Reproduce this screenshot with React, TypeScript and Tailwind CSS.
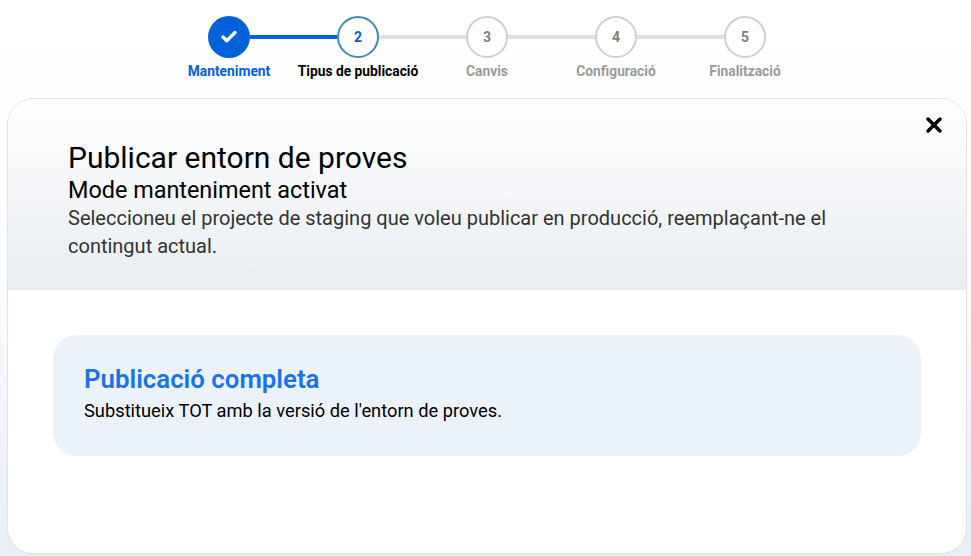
import { Check, X } from "lucide-react";

const steps = ["Manteniment", "Tipus de publicació", "Canvis", "Configuració", "Finalització"];

function Circle({ index }: { index: number }) {
  if (index === 0) {
    return (
      <div className="flex h-[42px] w-[42px] shrink-0 items-center justify-center rounded-full bg-[#0061d9] text-white">
        <Check size={18} strokeWidth={4.5} />
      </div>
    );
  }
  return (
    <div
      className={
        index === 1
          ? "flex h-[42px] w-[42px] shrink-0 items-center justify-center rounded-full border-2 border-[#3d8bb5] bg-white text-[14px] font-bold text-[#0061d9]"
          : "flex h-[42px] w-[42px] shrink-0 items-center justify-center rounded-full border-2 border-[#cfcfcf] bg-white text-[14px] font-bold text-[#808080]"
      }
    >
      {index + 1}
    </div>
  );
}

export default function App() {
  return (
    <main
      className="h-[556px] w-[971px] overflow-hidden bg-gradient-to-b from-white via-[#fbfcfe] to-[#e8eef6] pt-[16px]"
      style={{ fontFamily: "Roboto, sans-serif" }}
    >
      {/* Stepper */}
      <div className="flex flex-col items-center pl-[3px]">
        <div className="flex items-center">
          {steps.map((s, i) => (
            <div key={s} className="flex items-center">
              <Circle index={i} />
              {i < steps.length - 1 && (
                <div className={i === 0 ? "h-[4px] w-[87px] bg-[#0061d9]" : "h-[4px] w-[87px] bg-[#e0e0e0]"} />
              )}
            </div>
          ))}
        </div>
        <div className="mt-[4px] flex">
          {steps.map((s, i) => (
            <div
              key={s}
              className={
                i === 0
                  ? "w-[129px] text-center text-[13.8px] leading-[18px] font-bold whitespace-nowrap text-[#0061d9]"
                  : i === 1
                    ? "w-[129px] text-center text-[13.8px] leading-[18px] font-bold whitespace-nowrap text-black"
                    : "w-[129px] text-center text-[13.8px] leading-[18px] font-bold whitespace-nowrap text-[#9a9a9a]"
              }
            >
              {s}
            </div>
          ))}
        </div>
      </div>

      {/* Card */}
      <div className="relative mt-[18px] ml-[7px] h-[456px] w-[960px] overflow-hidden rounded-[26px] border border-[#e2e2e2] bg-white">
        <button className="absolute top-[14px] right-[20px] text-black">
          <X size={24} strokeWidth={3.5} />
        </button>
        <div className="h-[191px] bg-gradient-to-b from-white to-[#e9edf2] pt-[41px] pl-[60px]">
          <h1 className="text-[30px] leading-[36px] font-normal text-black">Publicar entorn de proves</h1>
          <h2 className="mt-[1px] text-[23.4px] leading-[27px] font-normal text-black">Mode manteniment activat</h2>
          <p className="w-[800px] text-[20px] leading-[28px] text-[#333333]">
            Seleccioneu el projecte de staging que voleu publicar en producció, reemplaçant-ne el contingut actual.
          </p>
        </div>
        <div className="px-[45px] pt-[45px]">
          <div className="h-[121px] rounded-[24px] bg-[#ecf2fa] px-[31px] pt-[27px]">
            <div className="text-[25.8px] leading-[34px] font-semibold text-[#1a73e8]">Publicació completa</div>
            <div className="mt-[2px] text-[18.3px] leading-[26px] text-black">Substitueix TOT amb la versió de l'entorn de proves.</div>
          </div>
        </div>
      </div>
    </main>
  );
}
